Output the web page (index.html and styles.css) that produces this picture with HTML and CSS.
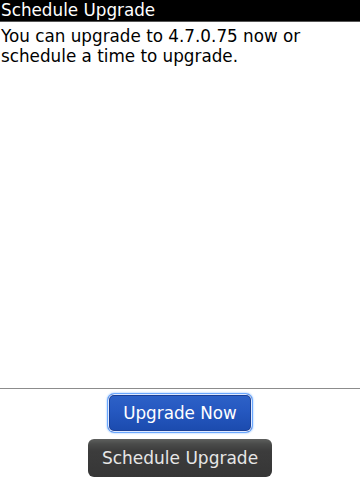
FILE: index.html
```html
<!DOCTYPE html>
<html>
<head>
<meta charset="utf-8">
<link rel="stylesheet" href="styles.css">
</head>
<body>
<div class="screen">
  <div class="titlebar">Schedule Upgrade</div>
  <div class="message">You can upgrade to 4.7.0.75 now or schedule a time to upgrade.</div>
  <div class="footer">
    <button class="btn btn-primary">Upgrade Now</button>
    <button class="btn btn-secondary">Schedule Upgrade</button>
  </div>
</div>
</body>
</html>
```
FILE: styles.css
```css
html, body {
  margin: 0;
  padding: 0;
  background: #fff;
}
.screen {
  width: 360px;
  height: 480px;
  display: flex;
  flex-direction: column;
  font-family: "DejaVu Sans", sans-serif;
  color: #000;
}
.titlebar {
  height: 22px;
  background: #000;
  color: #fff;
  font-size: 16.8px;
  line-height: 21px;
  padding-left: 1px;
  border-bottom: 1px solid #555;
  box-sizing: border-box;
}
.message {
  font-size: 16.8px;
  line-height: 20px;
  padding: 4px 1px 0 1px;
  flex: 1;
}
.footer {
  border-top: 1px solid #8c8c8c;
  display: flex;
  flex-direction: column;
  align-items: center;
  padding-top: 4px;
  padding-bottom: 3px;
  gap: 6px;
}
.btn {
  font-family: "DejaVu Sans", sans-serif;
  margin: 0;
  padding: 0;
  cursor: pointer;
}
.btn-primary {
  width: 146px;
  height: 40px;
  border-radius: 7px;
  color: #fff;
  font-size: 16.8px;
  border: 1px solid #6aa8ff;
  background: linear-gradient(#2e62c8 0%, #2558c0 45%, #1b4aad 100%);
  box-shadow: inset 0 0 0 1px #dfe9ff, inset 0 0 0 2px #1a3f95, 0 0 2px #7ab4ff;
}
.btn-secondary {
  width: 184px;
  height: 38px;
  border-radius: 6px;
  color: #e6e6e6;
  font-size: 17px;
  border: none;
  background: linear-gradient(#5e605e 0px, #4a4b4a 5px, #3c3c3c 12px, #363636 100%);
}
```
